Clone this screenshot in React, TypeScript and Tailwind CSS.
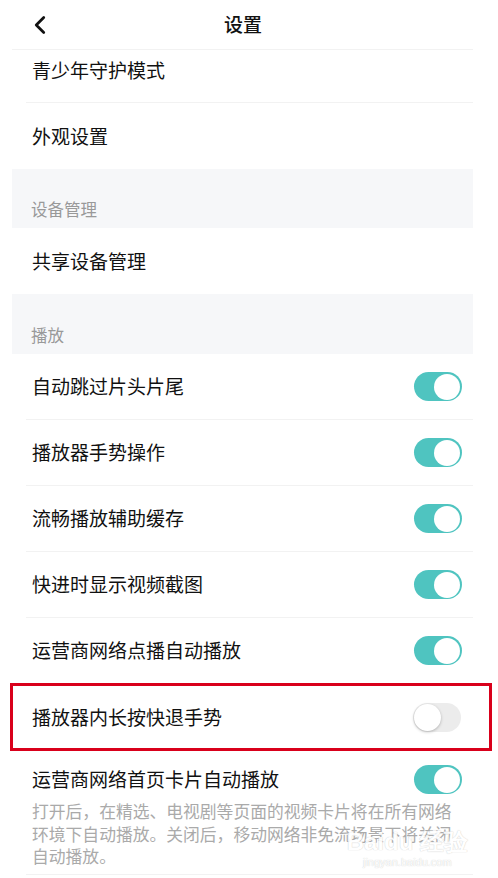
import { ChevronLeft } from 'lucide-react';

const toggles = [
  { label: '自动跳过片头片尾', on: true },
  { label: '播放器手势操作', on: true },
  { label: '流畅播放辅助缓存', on: true },
  { label: '快进时显示视频截图', on: true },
  { label: '运营商网络点播自动播放', on: true },
];

function Toggle({ on }: { on: boolean }) {
  if (on) {
    return (
      <div className="w-[48px] h-[29px] rounded-full bg-[#4fc4c0] flex items-center justify-end pr-[2px]">
        <div className="w-[26px] h-[26px] rounded-full bg-white" />
      </div>
    );
  }
  return (
    <div className="w-[48px] h-[29px] rounded-full bg-[#ececec] flex items-center justify-start pl-[1px]">
      <div className="w-[27px] h-[27px] rounded-full bg-white shadow-[0_1px_3px_rgba(0,0,0,0.25)]" />
    </div>
  );
}

export default function App() {
  return (
    <div className="relative w-[498px] h-[878px] overflow-hidden bg-white text-[#111] font-['Noto_Sans_CJK_SC','Noto_Sans',sans-serif]">
      {/* Header */}
      <header className="h-[49px] flex items-center relative">
        <ChevronLeft className="absolute left-[25px] w-[30px] h-[30px] text-[#111]" strokeWidth={2.2} />
        <h1 className="w-full text-center pr-[12px] text-[19px] font-medium">设置</h1>
      </header>

      <div className="ml-[12px] w-[461px]">
        <div className="border-t border-[#f2f2f2]" />
        <div className="h-[52px] flex items-center pb-[12px] pl-[20px] text-[19px]">青少年守护模式</div>
        <div className="ml-[14px] border-t border-[#f2f2f2]" />
        <div className="h-[66px] flex items-center pl-[20px] text-[19px]">外观设置</div>

        <div className="bg-[#f6f7f9] h-[59px] flex items-end pb-[6px] pl-[19px] text-[16.5px] text-[#999]">设备管理</div>
        <div className="h-[66px] flex items-center pl-[20px] text-[19px]">共享设备管理</div>
        <div className="bg-[#f6f7f9] h-[60px] flex items-end pb-[6px] pl-[19px] text-[16.5px] text-[#999]">播放</div>

        {toggles.map((t, i) => (
          <div key={t.label}>
            {i > 0 && <div className="ml-[14px] border-t border-[#f2f2f2]" />}
            <div className="h-[65px] flex items-center justify-between pl-[20px] pr-[11px] text-[19px]">
              <span>{t.label}</span>
              <Toggle on={t.on} />
            </div>
          </div>
        ))}
      </div>

      {/* Highlighted row */}
      <div className="ml-[10px] w-[482px] h-[68px] border-[3px] border-[#d9001b] flex items-center justify-between pl-[19px] pr-[28px] text-[19px]">
        <span>播放器内长按快退手势</span>
        <Toggle on={false} />
      </div>

      <div className="ml-[12px] w-[461px]">
        <div className="flex items-center justify-between pl-[20px] pr-[11px] pt-[14px] text-[19px]">
          <span>运营商网络首页卡片自动播放</span>
          <Toggle on={true} />
        </div>
        <p className="pl-[20px] pr-[16px] pt-[6px] pb-[6px] text-[16.8px] leading-[22.5px] text-[#aaa]">
          打开后，在精选、电视剧等页面的视频卡片将在所有网络环境下自动播放。关闭后，移动网络非免流场景下将关闭自动播放。
        </p>
        <div className="ml-[14px] border-t border-[#f2f2f2]" />
      </div>

      {/* watermark */}
      <div className="absolute right-[30px] bottom-[10px] flex flex-col items-center text-white opacity-90 [text-shadow:0_0_1px_#bbb]">
        <span className="text-[24px] font-bold leading-none font-['Liberation_Sans',sans-serif]">Baidu 经验</span>
        <span className="text-[11px] leading-none mt-[3px] font-['Liberation_Sans',sans-serif]">jingyan.baidu.com</span>
      </div>
    </div>
  );
}
